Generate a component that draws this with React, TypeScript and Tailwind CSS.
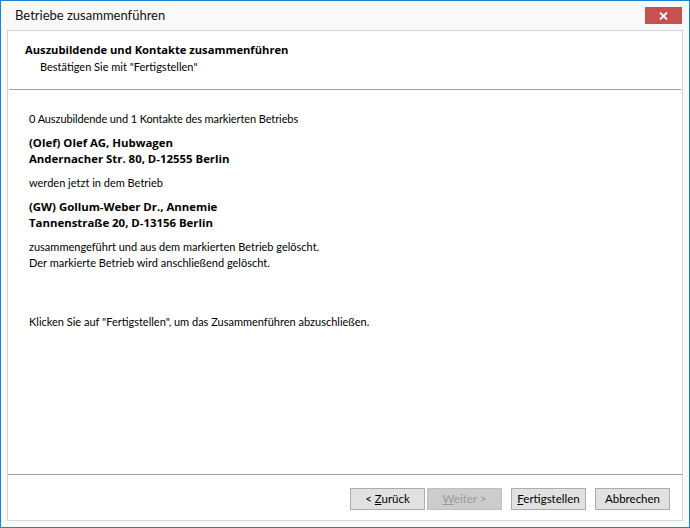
import React from "react";

function WizardButton({
  children,
  disabled,
}: {
  children: React.ReactNode;
  disabled?: boolean;
}) {
  return (
    <button
      disabled={disabled}
      className={
        disabled
          ? "flex h-[22px] w-[75px] items-center justify-center border border-[#bfbfbf] bg-[#cccccc] text-[11.5px] text-[#9a9a9a]"
          : "flex h-[22px] w-[75px] items-center justify-center border border-[#adadad] bg-[#e1e1e1] text-[11.5px] text-black"
      }
    >
      <span>{children}</span>
    </button>
  );
}

export default function App() {
  return (
    <div className="flex h-[528px] w-[690px] flex-col border border-[#1883d7] bg-[#f9f9f9] font-['Lato',sans-serif] text-black">
      {/* title bar */}
      <div className="flex h-[29px] shrink-0 items-start justify-between pl-[14px] pr-[7px]">
        <span className="mt-[6px] text-[13px] leading-[16px] text-[#111]">
          Betriebe zusammenführen
        </span>
        <button className="mt-[6px] flex h-[17px] w-[37px] items-center justify-center bg-[#c75050]">
          <svg width="9" height="8" viewBox="0 0 9 8">
            <path d="M1 0.5 L8 7.5 M8 0.5 L1 7.5" stroke="white" strokeWidth="1.8" />
          </svg>
        </button>
      </div>

      {/* panel */}
      <div className="mx-[6px] mb-[6px] flex flex-1 flex-col border border-[#d5d5d5] bg-white">
        <div className="h-[58px] shrink-0 pl-[17px] pt-[11px]">
          <div className="font-['Open_Sans',sans-serif] text-[11.2px] font-bold leading-[16px]">
            Auszubildende und Kontakte zusammenführen
          </div>
          <div className="mt-px pl-[15px] text-[11px] leading-[16px]">
            Bestätigen Sie mit "Fertigstellen"
          </div>
        </div>
        <div className="mx-px h-px shrink-0 bg-[#a0a0a0]" />

        <div className="flex flex-1 flex-col pl-[21px] pt-[21px] text-[11px] leading-[16px]">
          <p className="tracking-[-0.1px]">0 Auszubildende und 1 Kontakte des markierten Betriebs</p>
          <p className="mt-[8px] font-['Open_Sans',sans-serif] text-[11.4px] font-bold">
            (Olef) Olef AG, Hubwagen
            <br />
            Andernacher Str. 80, D-12555 Berlin
          </p>
          <p className="mt-[8px]">werden jetzt in dem Betrieb</p>
          <p className="mt-[8px] font-['Open_Sans',sans-serif] text-[11.4px] font-bold">
            (GW) Gollum-Weber Dr., Annemie
            <br />
            Tannenstraße 20, D-13156 Berlin
          </p>
          <p className="mt-[8px]">
            zusammengeführt und aus dem markierten Betrieb gelöscht.
            <br />
            Der markierte Betrieb wird anschließend gelöscht.
          </p>
          <p className="mt-[43px]">
            Klicken Sie auf "Fertigstellen", um das Zusammenführen abzuschließen.
          </p>
        </div>

        <div className="h-px shrink-0 bg-[#a0a0a0]" />
        <div className="flex h-[45px] shrink-0 items-start justify-end pr-[12px] pt-[13px]">
          <WizardButton>
            {"< "}
            <span className="underline">Z</span>urück
          </WizardButton>
          <div className="w-[2px]" />
          <WizardButton disabled>
            <span className="underline">W</span>eiter {">"}
          </WizardButton>
          <div className="w-[9px]" />
          <WizardButton>
            <span className="underline">F</span>ertigstellen
          </WizardButton>
          <div className="w-[9px]" />
          <WizardButton>Abbrechen</WizardButton>
        </div>
      </div>
    </div>
  );
}
